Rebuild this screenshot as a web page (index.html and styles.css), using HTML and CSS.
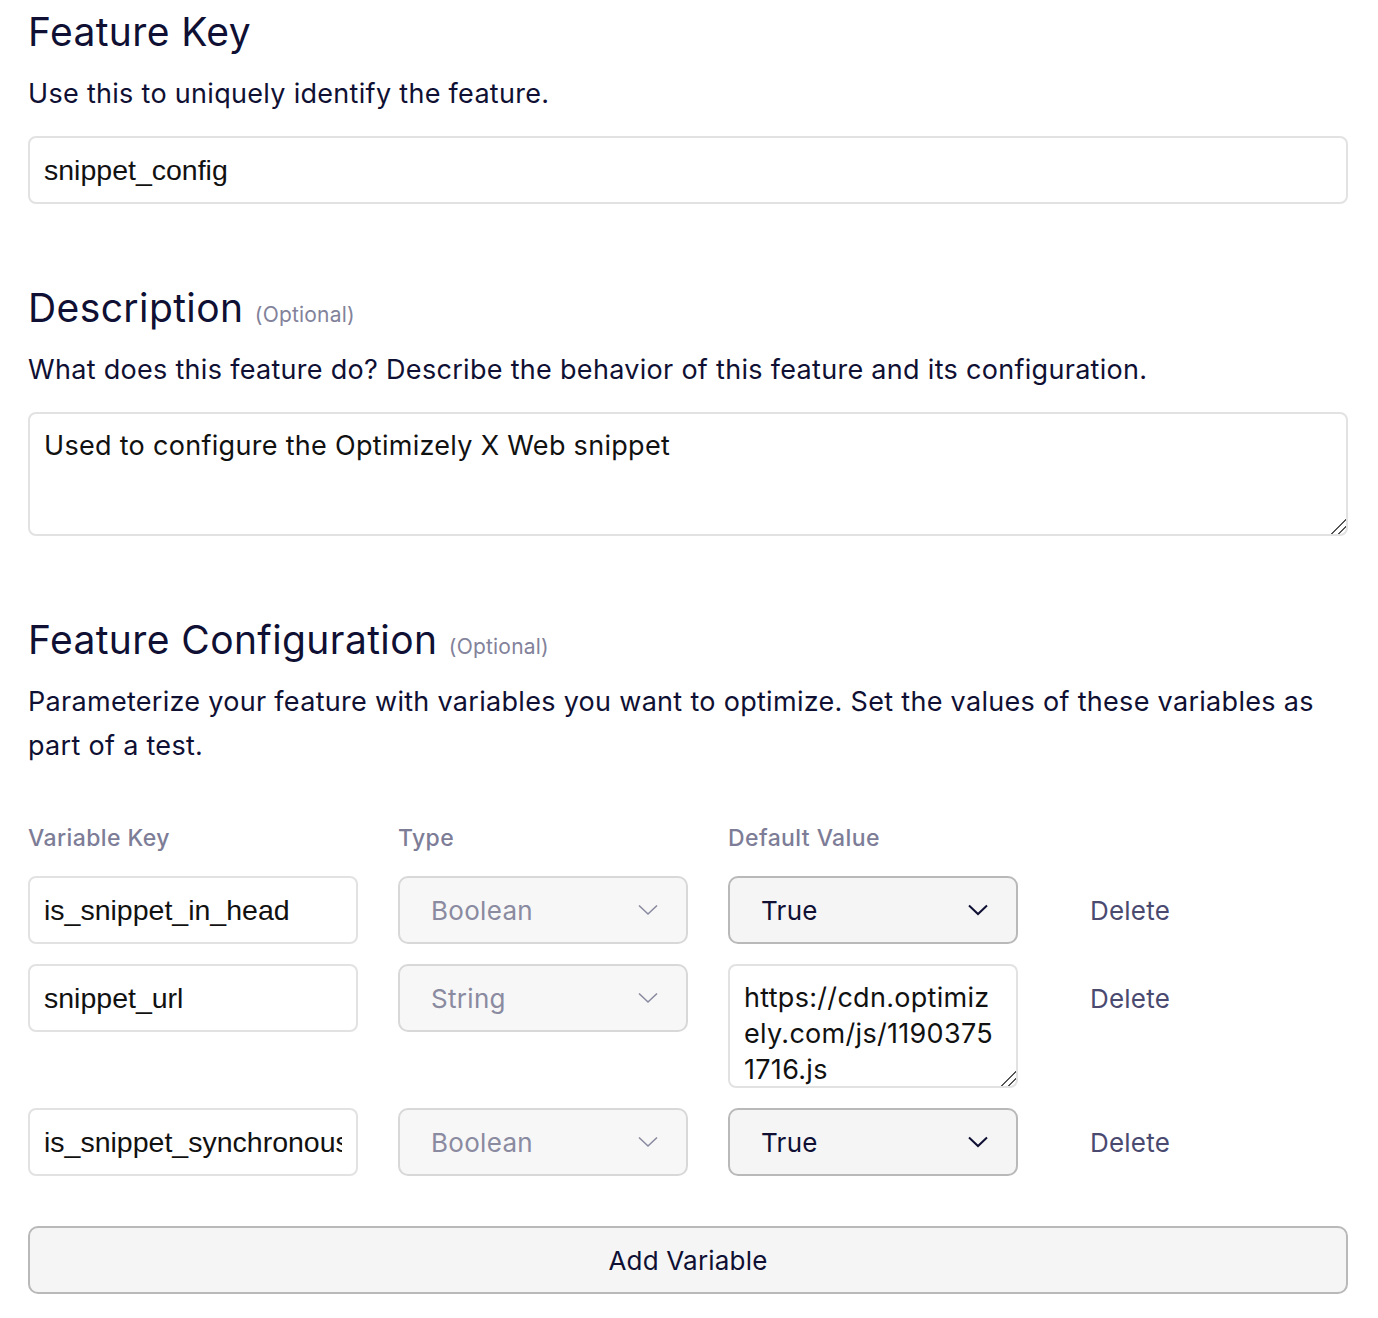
FILE: index.html
```html
<!DOCTYPE html>
<html>
<head>
<meta charset="utf-8">
<link rel="stylesheet" href="styles.css">
</head>
<body>
<div class="page">
  <section class="section">
    <h2 class="title">Feature Key</h2>
    <p class="help">Use this to uniquely identify the feature.</p>
    <input class="field" type="text" value="snippet_config">
  </section>

  <section class="section gap-top">
    <h2 class="title">Description <span class="optional">(Optional)</span></h2>
    <p class="help">What does this feature do? Describe the behavior of this feature and its configuration.</p>
    <textarea class="area">Used to configure the Optimizely X Web snippet</textarea>
  </section>

  <section class="section gap-top">
    <h2 class="title">Feature Configuration <span class="optional">(Optional)</span></h2>
    <p class="help">Parameterize your feature with variables you want to optimize. Set the values of these variables as part of a test.</p>

    <div class="vars">
      <div class="var-head">
        <div>Variable Key</div>
        <div>Type</div>
        <div>Default Value</div>
        <div></div>
      </div>

      <div class="var-row">
        <input class="field key" type="text" value="is_snippet_in_head">
        <div class="select disabled"><span>Boolean</span><svg class="chev" viewBox="0 0 20 12"><path d="M1 1.5 L10 10 L19 1.5"/></svg></div>
        <div class="select"><span>True</span><svg class="chev" viewBox="0 0 20 12"><path d="M1 1.5 L10 10 L19 1.5"/></svg></div>
        <div class="del">Delete</div>
      </div>

      <div class="var-row">
        <input class="field key" type="text" value="snippet_url">
        <div class="select disabled"><span>String</span><svg class="chev" viewBox="0 0 20 12"><path d="M1 1.5 L10 10 L19 1.5"/></svg></div>
        <textarea class="area small">https://cdn.optimizely.com/js/11903751716.js</textarea>
        <div class="del">Delete</div>
      </div>

      <div class="var-row">
        <input class="field key" type="text" value="is_snippet_synchronous">
        <div class="select disabled"><span>Boolean</span><svg class="chev" viewBox="0 0 20 12"><path d="M1 1.5 L10 10 L19 1.5"/></svg></div>
        <div class="select"><span>True</span><svg class="chev" viewBox="0 0 20 12"><path d="M1 1.5 L10 10 L19 1.5"/></svg></div>
        <div class="del">Delete</div>
      </div>
    </div>

    <button class="add">Add Variable</button>
  </section>
</div>
</body>
</html>
```

FILE: styles.css
```css
* { box-sizing: border-box; }
html, body { margin: 0; padding: 0; background: #fff; }
body {
  font-family: Inter, "Noto Sans", sans-serif;
  color: #0f1033;
}
.page {
  width: 1320px;
  margin-left: 28px;
  padding-top: 9px;
  padding-bottom: 24px;
}
.section { display: flex; flex-direction: column; }
.gap-top { margin-top: 81px; }
.title {
  margin: 0;
  font-size: 39px;
  line-height: 46px;
  font-weight: 400;
  letter-spacing: 0.4px;
  color: #0f1033;
}
.optional {
  font-size: 21px;
  line-height: 1;
  letter-spacing: 0.2px;
  color: #82829a;
  font-weight: 400;
}
.help {
  margin: 17px 0 0 0;
  font-size: 27px;
  line-height: 44px;
  letter-spacing: 0.3px;
  color: #0f1033;
}
.field {
  margin-top: 20px;
  height: 68px;
  width: 100%;
  border: 2px solid #e2e2e2;
  border-radius: 8px;
  padding: 0 14px;
  font-family: "Liberation Sans", Arial, sans-serif;
  font-size: 28.5px;
  color: #111;
  background: #fff;
  outline: none;
}
.area {
  margin-top: 20px;
  height: 124px;
  width: 100%;
  border: 2px solid #e2e2e2;
  border-radius: 8px;
  padding: 14px 14px;
  font-family: Inter, "Noto Sans", sans-serif;
  font-size: 27px;
  line-height: 36px;
  letter-spacing: 0.3px;
  color: #111;
  resize: vertical;
  outline: none;
}
.area::-webkit-resizer {
  background: linear-gradient(135deg, transparent 48%, #555 48%, #555 55%, transparent 55%, transparent 72%, #555 72%, #555 79%, transparent 79%);
}
.vars { margin-top: 55px; }
.var-head, .var-row {
  display: grid;
  grid-template-columns: 330px 290px 290px 1fr;
  column-gap: 40px;
}
.var-head div {
  font-size: 23px;
  line-height: 30px;
  font-weight: 500;
  letter-spacing: 0.4px;
  color: #7d7d97;
}
.var-row { margin-top: 20px; align-items: start; }
.var-head + .var-row { margin-top: 23px; }
.var-row .field { margin-top: 0; }
.var-row .area.small {
  margin-top: 0;
  height: 124px;
  padding: 14px 14px 0 14px;
  word-break: break-all;
  overflow: hidden;
  resize: both;
}
.select {
  height: 68px;
  border: 2px solid #b9b9b9;
  border-radius: 10px;
  background: #f5f5f5;
  display: flex;
  align-items: center;
  justify-content: space-between;
  padding: 0 28px 0 31px;
  font-size: 26px;
  letter-spacing: 0.3px;
  color: #0f1033;
}
.select.disabled {
  border-color: #d8d8d8;
  background: #f7f7f7;
  color: #8a8aa0;
}
.chev { width: 20px; height: 12px; }
.chev path { fill: none; stroke: #0f1033; stroke-width: 2; }
.select.disabled .chev path { stroke: #8a8aa0; stroke-width: 1.6; }
.del {
  height: 68px;
  display: flex;
  align-items: center;
  padding-left: 32px;
  font-size: 26px;
  letter-spacing: 0.2px;
  color: #4a4a70;
}
.add {
  margin-top: 50px;
  height: 68px;
  width: 100%;
  border: 2px solid #b9b9b9;
  border-radius: 10px;
  background: #f5f5f5;
  font-family: Inter, "Noto Sans", sans-serif;
  font-size: 26px;
  letter-spacing: 0.2px;
  color: #0f1033;
}
```
